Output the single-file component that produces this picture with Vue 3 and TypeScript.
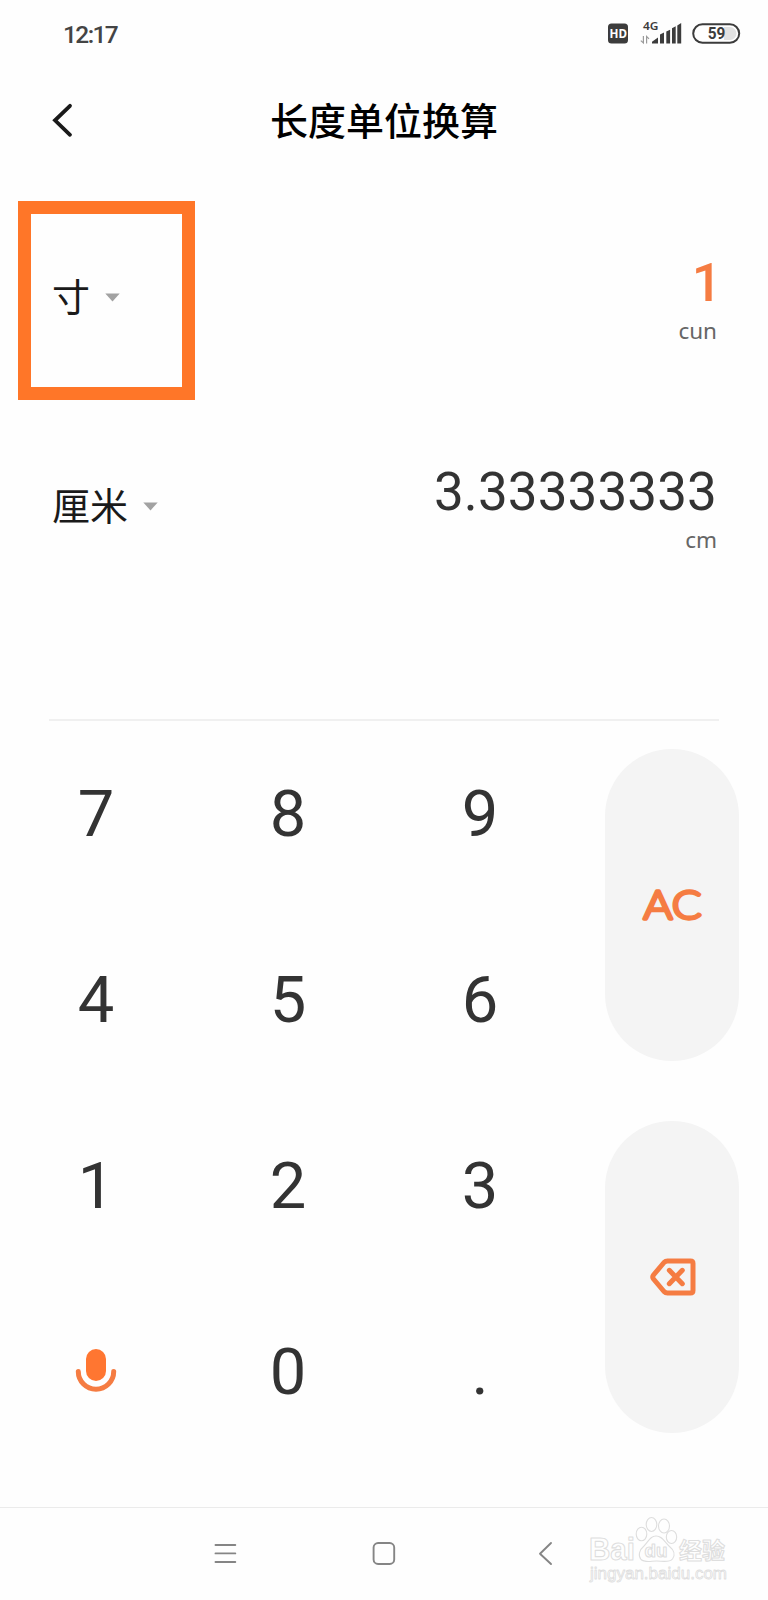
<script setup lang="ts">
interface UnitRow {
  name: string
  value: string
  symbol: string
  active: boolean
}

const rows: UnitRow[] = [
  { name: '寸', value: '1', symbol: 'cun', active: true },
  { name: '厘米', value: '3.33333333', symbol: 'cm', active: false },
]

const keys: string[] = ['7', '8', '9', '4', '5', '6', '1', '2', '3', 'mic', '0', '.']
</script>

<template>
  <div class="screen">
    <header class="status">
      <span class="clock">12:17</span>
      <svg class="status-icons" width="136" height="32" viewBox="606 18 136 32">
        <rect x="608" y="23.5" width="20" height="20" rx="3.5" fill="#3c3c3c" />
        <text class="hd" x="609.500" y="38" textLength="17.500" lengthAdjust="spacingAndGlyphs">HD</text>
        <text class="net" x="643" y="30" textLength="15.500" lengthAdjust="spacingAndGlyphs">4G</text>
        <path d="M643.400 36v7l-2.600-2.400M646.600 43.400v-7l2.400 2.400" fill="none" stroke="#9a9a9a" stroke-width="1.2" />
        <g fill="#3c3c3c">
          <path d="M652 43.5v-1.8l6-4.2v6z" />
          <path d="M660 43.5v-9l4-2v11z" />
          <path d="M666.3 43.5v-12l3.8-1.8v13.8z" />
          <path d="M672 43.5v-15.2l3.7-2v17.2z" />
          <path d="M677.3 43.5v-18l3.9-2.6v20.6z" />
        </g>
        <rect x="693.2" y="24.2" width="46" height="18.6" rx="9.3" fill="#fff" stroke="#3c3c3c" stroke-width="2" />
        <path d="M724 27h6a6.5 6.5 0 0 1 0 13h-6z" fill="#e2e2e2" />
        <text class="battery" x="707.800" y="39.300" textLength="17.600" lengthAdjust="spacingAndGlyphs">59</text>
      </svg>
    </header>

    <div class="titlebar">
      <svg class="back" width="24" height="40" viewBox="0 0 24 40">
        <path d="M20 5.800L5 20.300L20 34.800" fill="none" stroke="#1a1a1a" stroke-width="3.800" stroke-linecap="round" />
      </svg>
      <h1>长度单位换算</h1>
    </div>

    <main class="units">
      <section v-for="row in rows" :key="row.symbol" class="unit">
        <div class="picker">
          <span>{{ row.name }}</span>
          <svg width="15" height="9" viewBox="0 0 15 9"><path d="M.3.500h14.400L7.500 8.400z" fill="#a2a2a2" /></svg>
        </div>
        <div class="reading" :class="{ active: row.active }">
          <div class="value">{{ row.value }}</div>
          <div class="symbol">{{ row.symbol }}</div>
        </div>
        <div v-if="row.active" class="highlight"></div>
      </section>
    </main>

    <div class="divider"></div>

    <section class="keypad">
      <div class="digits">
        <div v-for="key in keys" :key="key" class="key">
          <svg v-if="key === 'mic'" class="mic" width="42" height="44" viewBox="0 0 42 44">
            <rect x="11" y="1" width="20" height="32" rx="10" fill="#ff7631" />
            <path d="M3.300 23.500a17.700 17.700 0 0 0 35.400 0" fill="none" stroke="#f57c42" stroke-width="5" stroke-linecap="round" />
          </svg>
          <span v-else>{{ key }}</span>
        </div>
      </div>
      <div class="actions">
        <button class="pill">
          <svg width="84" height="64" viewBox="-10 -10 84 64">
            <text class="ac" x="3.500" y="36.200" textLength="58" lengthAdjust="spacingAndGlyphs">AC</text>
          </svg>
        </button>
        <button class="pill">
          <svg class="erase" width="48" height="40" viewBox="0 0 48 40" fill="none" stroke="#f57c42" stroke-width="5" stroke-linecap="round" stroke-linejoin="round">
            <path d="M18.500 4H41.500Q44 4 44 6.500V33.500Q44 36 41.500 36H18.500Q16.500 36 15 34.500L4.500 22Q3 20 4.500 18L15 5.500Q16.500 4 18.500 4Z" />
            <path d="M20.300 13.300L33.300 26.700M33.300 13.300L20.300 26.700" />
          </svg>
        </button>
      </div>
    </section>

    <nav class="navbar">
      <svg class="nav-icons" width="768" height="92" viewBox="0 1508 768 92" fill="none" stroke="#858585" stroke-width="1.900" stroke-linecap="round" stroke-linejoin="round">
        <path d="M215.500 1545h19.800M215.500 1553.400h19.800M215.500 1562h19.800" />
        <rect x="373.600" y="1543" width="20.600" height="21" rx="4.500" />
        <path d="M551 1543L540 1553.700L551 1564" />
        <g class="mark">
          <text class="mark-main" x="589" y="1560" textLength="46" lengthAdjust="spacingAndGlyphs">Bai</text>
          <ellipse cx="641.500" cy="1534" rx="5.300" ry="6.800" />
          <ellipse cx="651.500" cy="1524.500" rx="5.300" ry="7" />
          <ellipse cx="664" cy="1526" rx="5.500" ry="7" />
          <ellipse cx="671.500" cy="1537" rx="5.200" ry="6.500" />
          <path d="M656 1536C662 1536 664 1541 669 1546C674 1550 675.500 1555 672.500 1559C669 1563 662 1561 656.500 1561C651 1561 645 1563 641 1559.500C638 1556 639 1550 644 1546C649 1541 650 1536 656 1536Z" />
          <text class="mark-du" x="644.500" y="1557" textLength="23" lengthAdjust="spacingAndGlyphs">du</text>
          <text class="mark-cn" x="679" y="1558.500" textLength="46" lengthAdjust="spacingAndGlyphs">经验</text>
          <text class="mark-url" x="590" y="1578.500" textLength="137" lengthAdjust="spacingAndGlyphs">jingyan.baidu.com</text>
        </g>
      </svg>
    </nav>
  </div>
</template>

<style>
body {
  background: #fefefe;
}
</style>

<style scoped>
.screen {
  width: 768px;
  height: 1600px;
  display: flex;
  flex-direction: column;
  background: #fefefe;
  font-family: Roboto, 'Noto Sans', 'Noto Sans CJK SC', sans-serif;
  color: #333;
  overflow: hidden;
}
.status {
  height: 68px;
  box-sizing: border-box;
  padding: 0 26px 0 63px;
  display: flex;
  justify-content: space-between;
  align-items: center;
}
.clock {
  font-size: 24.5px;
  font-weight: 500;
  letter-spacing: -1.6px;
  color: #444;
  line-height: 34px;
  padding-top: 1px;
}
.hd {
  font: 700 13px 'Noto Sans', sans-serif;
  fill: #fff;
}
.net {
  font: 600 11px 'Noto Sans', sans-serif;
  fill: #3c3c3c;
}
.battery {
  font: 700 16.5px Roboto, sans-serif;
  fill: #3c3c3c;
}
.titlebar {
  height: 124px;
  display: grid;
  grid-template-columns: 100px 1fr 100px;
  align-items: start;
}
.back {
  margin: 32px 0 0 50px;
}
h1 {
  margin: 23px 0 0;
  text-align: center;
  font: 500 38px/56px 'Noto Sans CJK SC', sans-serif;
  color: #000;
}
.units {
  height: 527px;
}
.unit {
  position: relative;
  height: 209px;
  box-sizing: border-box;
  padding: 0 51px 0 52px;
  display: flex;
  justify-content: space-between;
}
.picker {
  height: 210px;
  display: flex;
  align-items: center;
  gap: 14.5px;
  font: 400 38px/56px 'Noto Sans CJK SC', sans-serif;
  color: #1a1a1a;
}
.picker span {
  margin-top: -4px;
}
.reading {
  padding-top: 56px;
  text-align: right;
}
.value {
  font-size: 53px;
  line-height: 70px;
  letter-spacing: 0.1px;
}
.active .value {
  color: #f57c42;
  font-weight: 500;
  margin-right: -5px;
}
.symbol {
  margin-top: -3px;
  font-family: 'Noto Sans', sans-serif;
  font-size: 22.5px;
  line-height: 32px;
  color: #666;
}
.highlight {
  position: absolute;
  left: 18px;
  top: 9px;
  width: 177px;
  height: 199px;
  box-sizing: border-box;
  border: 13px solid #ff7628;
}
.divider {
  height: 2px;
  margin: 0 49px;
  background: #f0f0f0;
}
.keypad {
  height: 744px;
  display: grid;
  grid-template-columns: 576px 192px;
}
.digits {
  display: grid;
  grid-template-columns: repeat(3, 192px);
  grid-template-rows: repeat(4, 186px);
}
.key {
  display: flex;
  align-items: center;
  justify-content: center;
  font-size: 65px;
  line-height: 88px;
}
.mic {
  margin-top: -5px;
}
.actions {
  display: grid;
  grid-template-rows: repeat(2, 312px);
  gap: 60px;
  padding-top: 28px;
  justify-content: center;
}
.pill {
  width: 134px;
  border: 0;
  padding: 0;
  border-radius: 67px;
  background: #f4f4f4;
  display: flex;
  align-items: center;
  justify-content: center;
}
.erase {
  margin-left: 1px;
}
.ac {
  font: 300 40px Lato, sans-serif;
  fill: #f57c42;
  stroke: #f57c42;
  stroke-width: 3.3px;
  stroke-linejoin: round;
}
.navbar {
  margin-top: auto;
  height: 93px;
  box-sizing: border-box;
  border-top: 1px solid #ebebeb;
}
.nav-icons {
  display: block;
}
.mark {
  fill: #fefefe;
  stroke: #dedede;
  stroke-width: 1.1px;
}
.mark-main {
  font: 700 32px 'Liberation Sans', sans-serif;
}
.mark-du {
  font: 700 19px 'Liberation Sans', sans-serif;
}
.mark-cn {
  font: 700 23px 'Noto Sans CJK SC', sans-serif;
}
.mark-url {
  font: 400 16px 'Liberation Sans', sans-serif;
  stroke-width: 0.8px;
}
</style>
